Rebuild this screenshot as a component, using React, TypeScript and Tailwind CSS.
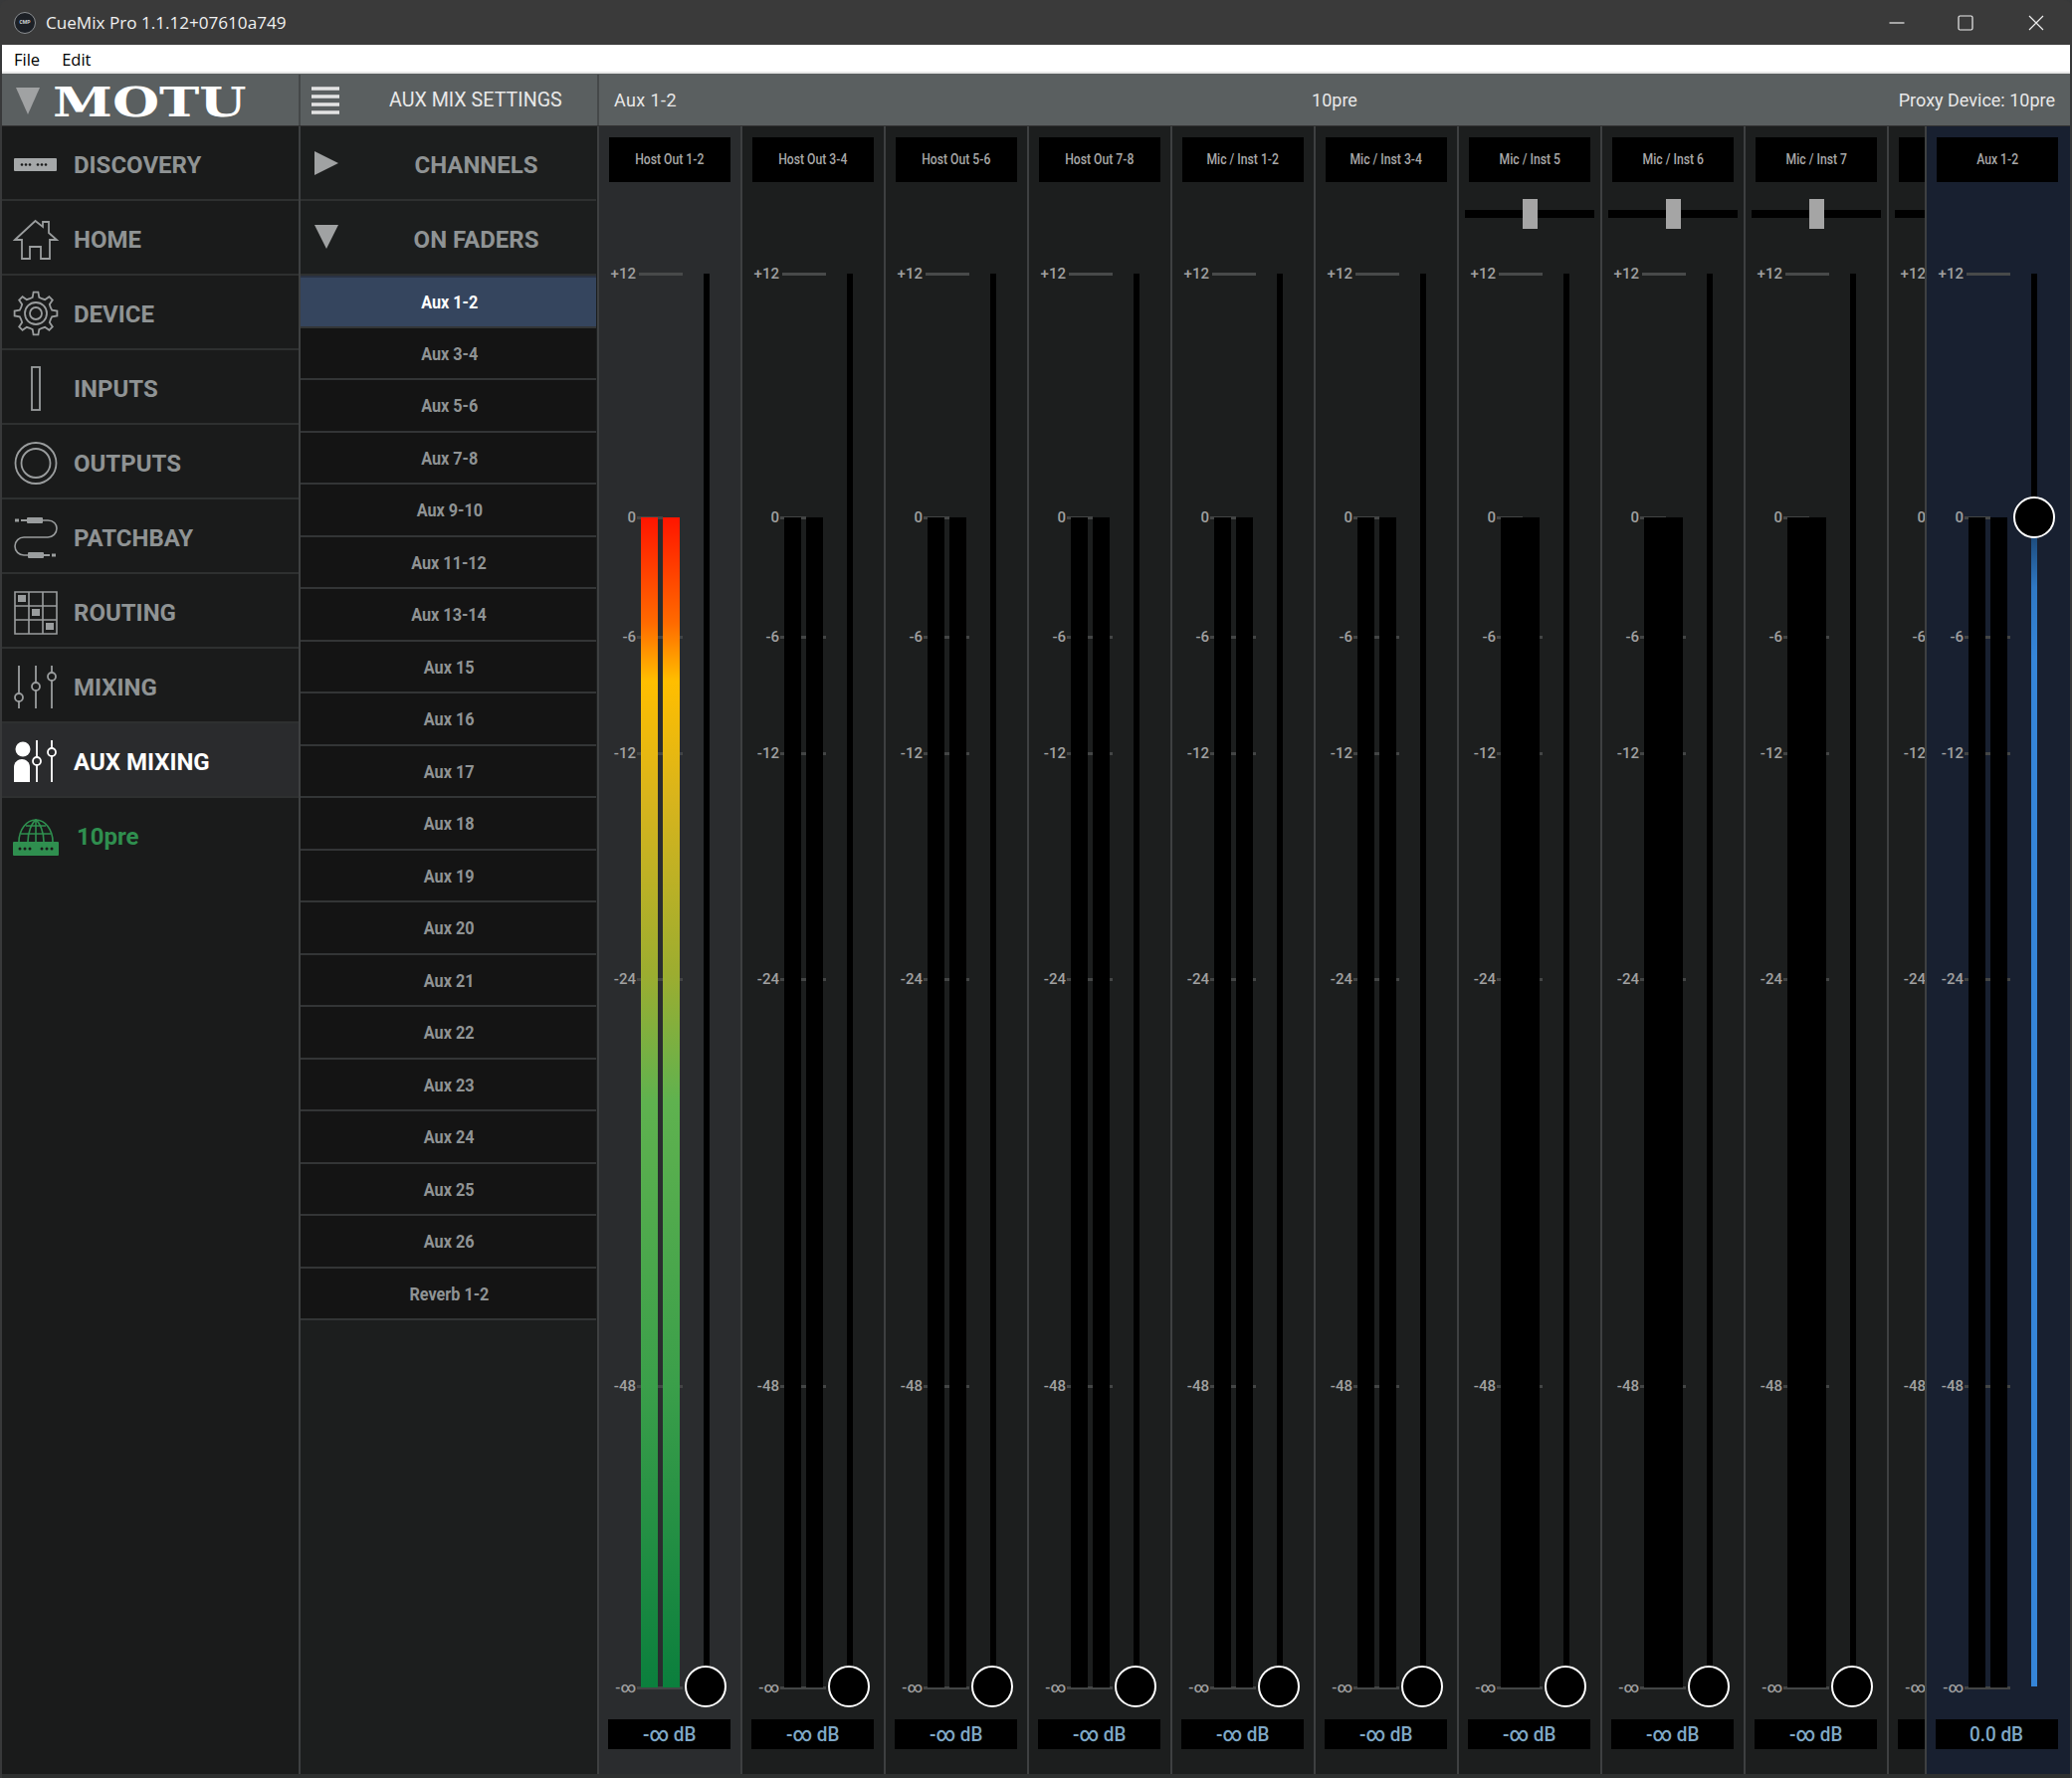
import React from 'react';

const auxList = [
  'Aux 1-2', 'Aux 3-4', 'Aux 5-6', 'Aux 7-8', 'Aux 9-10', 'Aux 11-12', 'Aux 13-14', 'Aux 15', 'Aux 16', 'Aux 17',
  'Aux 18', 'Aux 19', 'Aux 20', 'Aux 21', 'Aux 22', 'Aux 23', 'Aux 24', 'Aux 25', 'Aux 26', 'Reverb 1-2',
];

// the last strip is cut off by the aux master, none of its text shows
const channels = [
  { id: 1, name: 'Host Out 1-2', readout: '-∞ dB', stereo: true, active: true },
  { id: 2, name: 'Host Out 3-4', readout: '-∞ dB', stereo: true },
  { id: 3, name: 'Host Out 5-6', readout: '-∞ dB', stereo: true },
  { id: 4, name: 'Host Out 7-8', readout: '-∞ dB', stereo: true },
  { id: 5, name: 'Mic / Inst 1-2', readout: '-∞ dB', stereo: true },
  { id: 6, name: 'Mic / Inst 3-4', readout: '-∞ dB', stereo: true },
  { id: 7, name: 'Mic / Inst 5', readout: '-∞ dB', trim: true },
  { id: 8, name: 'Mic / Inst 6', readout: '-∞ dB', trim: true },
  { id: 9, name: 'Mic / Inst 7', readout: '-∞ dB', trim: true },
  { id: 10, name: '', readout: '', trim: true },
];

// y offset of each scale mark inside the 1422px fader area
const ticks = [
  { label: '0', y: 245 },
  { label: '-6', y: 365 },
  { label: '-12', y: 482 },
  { label: '-24', y: 709 },
  { label: '-48', y: 1118 },
  { label: '-∞', y: 1421 },
];

const gearPath = () => {
  const pts: string[] = [];
  for (let i = 0; i < 8; i++) {
    const a = (i * Math.PI) / 4 - Math.PI / 2;
    const p = (r: number, d: number) => {
      const x = 24 + r * Math.cos(a + d);
      const y = 25 + r * Math.sin(a + d);
      return `${x.toFixed(1)} ${y.toFixed(1)}`;
    };
    pts.push(`${i === 0 ? 'M' : 'L'}${p(16.5, -0.2)}`, `L${p(21.5, -0.11)}`, `L${p(21.5, 0.11)}`, `L${p(16.5, 0.2)}`, `L${p(16, 0.39)}`);
  }
  return pts.join(' ') + ' Z';
};

const icons: Record<string, React.ReactNode> = {
  discovery: (
    <>
      <rect x="2" y="19" width="43" height="13" rx="1" fill="#a5a8a9" />
      {[8, 12, 16, 24, 28, 32].map((x) => (
        <circle key={x} cx={x + 2} cy="25.5" r="1.3" fill="#1a1b1b" />
      ))}
    </>
  ),
  home: (
    <path d="M3 26 L23.500 7 L31 13 V8 H37 V19 L45 26 H38 V45 H29 V33 H18 V45 H10 V26 Z" fill="none" stroke="#9a9d9e" strokeWidth="1.8" />
  ),
  device: (
    <>
      <path d={gearPath()} fill="none" stroke="#9a9d9e" strokeWidth="1.8" />
      <circle cx="24" cy="25" r="11" fill="none" stroke="#9a9d9e" strokeWidth="1.8" />
      <circle cx="24" cy="25" r="6" fill="none" stroke="#9a9d9e" strokeWidth="1.8" />
    </>
  ),
  inputs: <rect x="20" y="4" width="8" height="43" fill="none" stroke="#9a9d9e" strokeWidth="1.8" />,
  outputs: (
    <>
      <circle cx="24" cy="25.500" r="20.500" fill="none" stroke="#9a9d9e" strokeWidth="1.8" />
      <circle cx="24" cy="25.500" r="14.500" fill="none" stroke="#9a9d9e" strokeWidth="1.8" />
    </>
  ),
  patchbay: (
    <>
      <path d="M30 8 H36 C42 8 45 12 45 16 C45 21 41 25 36 25 H12 C7 25 3 29 3 34 C3 39 7 43 12 43 H18" fill="none" stroke="#9a9d9e" strokeWidth="1.6" />
      <rect x="3" y="6.500" width="4" height="3" fill="#9a9d9e" />
      <rect x="9" y="7" width="6" height="2" fill="#9a9d9e" />
      <rect x="15" y="5" width="16" height="6" rx="1" fill="#9a9d9e" />
      <rect x="16" y="40" width="16" height="6" rx="1" fill="#9a9d9e" />
      <rect x="32" y="42" width="6" height="2" fill="#9a9d9e" />
      <rect x="40" y="41.500" width="4" height="3" fill="#9a9d9e" />
    </>
  ),
  routing: (
    <>
      <path d="M3 5 H45 V47 H3 Z M17 5 V47 M31 5 V47 M3 19 H45 M3 33 H45" fill="none" stroke="#9a9d9e" strokeWidth="1.6" />
      <rect x="6" y="8" width="8" height="7" fill="#9a9d9e" />
      <rect x="20" y="22" width="8" height="7" fill="#9a9d9e" />
      <rect x="34" y="36" width="8" height="7" fill="#9a9d9e" />
    </>
  ),
  mixing: (
    <g stroke="#9a9d9e" strokeWidth="1.8" fill="#1a1b1b">
      <path d="M7 4 V47 M24 4 V47 M40 4 V47" />
      <circle cx="7" cy="36" r="4" />
      <circle cx="24" cy="25" r="4" />
      <circle cx="40" cy="15" r="4" />
    </g>
  ),
  aux: (
    <>
      <circle cx="11" cy="13" r="7.500" fill="#fff" />
      <path d="M2 46 V31 C2 26 6 23 10 23 C14 23 18 26 18 31 V46 Z" fill="#fff" />
      <g stroke="#fff" strokeWidth="1.8" fill="#2a2b2d">
        <path d="M25 4 V46 M40 4 V46" />
        <circle cx="25" cy="25" r="4" />
        <circle cx="40" cy="16" r="4" />
      </g>
    </>
  ),
  device10: (
    <>
      <g fill="none" stroke="#2f8f4f" strokeWidth="1.6">
        <path d="M7 30 A17 22 0 0 1 41 30" />
        <path d="M16 30 C16 20 20 11 24 8 C28 11 32 20 32 30 M24 8 V30 M9 22 H39 M14 14 H34" />
      </g>
      <rect x="1" y="30" width="46" height="14" rx="1" fill="#2f8f4f" />
      {[7, 12, 17, 29, 34, 39].map((x) => (
        <circle key={x} cx={x + 1} cy="37" r="1.500" fill="#1a1b1b" />
      ))}
    </>
  ),
};

const navItems = [
  { key: 'discovery', label: 'DISCOVERY' },
  { key: 'home', label: 'HOME' },
  { key: 'device', label: 'DEVICE' },
  { key: 'inputs', label: 'INPUTS' },
  { key: 'outputs', label: 'OUTPUTS' },
  { key: 'patchbay', label: 'PATCHBAY' },
  { key: 'routing', label: 'ROUTING' },
  { key: 'mixing', label: 'MIXING' },
  { key: 'aux', label: 'AUX MIXING', active: true },
];

const FaderArea = ({ stereo, level, value }: { stereo?: boolean; level?: boolean; value?: boolean }) => (
  <div className="relative h-[1422px] shrink-0">
    {/* +12 mark */}
    <div className="absolute left-0 top-[-8px] h-4 w-[37px] text-right text-[15px] leading-4 font-medium whitespace-nowrap text-[#a0a0a0]">
      +12
    </div>
    <div className="absolute left-[40px] top-[-1px] h-[3px] w-[44px] bg-[#484a4a]" />

    {ticks.map((t) => (
      <React.Fragment key={t.label}>
        <div className={`absolute left-[38px] h-[3px] bg-[#434545] ${t.label === '0' ? 'w-[26px]' : 'w-[46px]'}`} style={{ top: t.y - 1 }} />
        <div
          className="absolute left-0 h-4 w-[37px] text-right text-[15px] leading-4 font-medium text-[#a0a0a0]"
          style={{ top: t.y - 8 }}
        >
          {t.label}
        </div>
      </React.Fragment>
    ))}

    {/* meters */}
    {stereo ? (
      <>
        <div className={`absolute left-[42px] top-[245px] h-[1176px] w-[17px] ${level ? 'bg-[linear-gradient(#ff1500_0%,#ff6a00_9%,#ffbe00_14%,#d8b41c_24%,#9cad30_39%,#5fb24f_50%,#3b9f4a_74%,#0b7f3d_100%)]' : 'bg-black'}`} />
        <div className={`absolute left-[64px] top-[245px] h-[1176px] w-[17px] ${level ? 'bg-[linear-gradient(#ff1500_0%,#ff6a00_9%,#ffbe00_14%,#d8b41c_24%,#9cad30_39%,#5fb24f_50%,#3b9f4a_74%,#0b7f3d_100%)]' : 'bg-black'}`} />
      </>
    ) : (
      <div className="absolute left-[42px] top-[245px] h-[1176px] w-[39px] bg-black" />
    )}

    {/* fader */}
    <div className="absolute left-[105px] top-0 h-[1420px] w-[6px] bg-black" />
    {value ? (
      <>
        <div className="absolute left-[105px] top-[245px] h-[1175px] w-[6px] bg-[linear-gradient(#163a60_0%,#2f78c4_6%,#3585d8_12%,#3585d8_100%)]" />
        <div className="absolute left-[87px] top-[224px] h-[42px] w-[42px] rounded-full border-2 border-white bg-black" />
      </>
    ) : (
      <div className="absolute left-[86px] top-[1399px] h-[42px] w-[42px] rounded-full border-2 border-white bg-black" />
    )}
  </div>
);

const Strip = ({
  name,
  stereo,
  trim,
  active,
  value,
  readout,
  className,
}: {
  name: string;
  stereo?: boolean;
  trim?: boolean;
  active?: boolean;
  value?: boolean;
  readout: string;
  className: string;
}) => (
  <div className={`flex w-[144px] shrink-0 flex-col pt-[11px] ${className} ${active ? 'bg-[#2a2c2e]' : ''}`}>
    <div className="mx-[10px] flex h-[45px] w-[122px] shrink-0 items-center justify-center bg-black text-[14px] font-medium text-[#a8a8a8]">
      <span className="inline-block scale-x-[0.87] whitespace-nowrap">{name}</span>
    </div>
    <div className="flex h-[92px] shrink-0 items-start pl-[6px] pt-[17px]">
      {trim && (
        <div className="flex h-[30px] w-[130px] items-center justify-center bg-[linear-gradient(transparent_11px,#000_11px,#000_19px,transparent_19px)]">
          <div className="h-[30px] w-[15px] bg-[#a5a5a5]" />
        </div>
      )}
    </div>
    <FaderArea stereo={stereo} level={active} value={value} />
    <div className="mx-[9px] mt-[31px] flex h-[30px] w-[123px] shrink-0 items-center justify-center bg-black pt-[2px] text-[21px] font-medium text-[#7fa8c6]">
      <span className="inline-block scale-x-[0.9] whitespace-nowrap">{readout}</span>
    </div>
  </div>
);

export default function App() {
  return (
    <div className="relative h-[1787px] w-[2082px] overflow-hidden bg-[#38393a] font-['Roboto',sans-serif]">
      {/* title bar */}
      <div className="flex h-[45px] items-center rounded-tl-lg rounded-tr-lg bg-[#3a3a3a] pl-[14px] text-white">
        <div className="flex h-[22px] w-[22px] items-center justify-center rounded-full border border-[#8a8d90] bg-[#1c2026] text-[5px] font-bold text-[#cfd2d4]">
          CMP
        </div>
        <span className="ml-[10px] font-['Open_Sans',sans-serif] text-[17.100px] text-[#f0f0f0]">CueMix Pro 1.1.12+07610a749</span>
        <div className="ml-auto flex items-center">
          <svg width="16" height="16" viewBox="0 0 16 16" className="mr-[53px]">
            <path d="M0.500 8 H15.500" stroke="#eee" strokeWidth="1.200" />
          </svg>
          <svg width="16" height="16" viewBox="0 0 16 16" className="mr-[55px]">
            <rect x="1" y="1" width="14" height="14" rx="1.500" fill="none" stroke="#eee" strokeWidth="1.200" />
          </svg>
          <svg width="16" height="16" viewBox="0 0 16 16" className="mr-[28px]">
            <path d="M1 1 L15 15 M15 1 L1 15" stroke="#eee" strokeWidth="1.200" />
          </svg>
        </div>
      </div>

      <div className="mx-[2px] flex h-[1742px] flex-col">
        {/* menu */}
        <div className="flex h-[29px] shrink-0 items-center gap-[22px] border-b-[2px] border-[#e8e8e8] bg-white pl-[12px] pt-[3px] font-['Open_Sans',sans-serif] text-[16.500px] text-black">
          <span>File</span>
          <span>Edit</span>
        </div>

        {/* header */}
        <div className="flex h-[53px] shrink-0 border-b border-[#333] bg-[#5a5f60] pt-[1px] text-[#e8e8e8]">
          <div className="flex w-[300px] items-center border-r-2 border-[#454849] pl-[14px]">
            <svg width="24" height="28" viewBox="0 0 24 28">
              <path d="M0 1 H24 L12 28 Z" fill="#a0a2a3" />
            </svg>
            <span className="ml-[13px] mt-[5px] inline-block origin-left scale-x-[1.32] font-['DejaVu_Serif',serif] text-[41px] leading-none font-bold text-white">
              MOTU
            </span>
          </div>
          <div className="relative flex w-[300px] items-center border-r-2 border-[#454849] pl-[11px]">
            <svg width="28" height="28" viewBox="0 0 28 28">
              <path d="M0 2 H28 M0 10 H28 M0 18 H28 M0 26 H28" stroke="#e4e4e4" strokeWidth="3.500" />
            </svg>
            <span className="ml-[50px] text-[20.500px] whitespace-nowrap">
              <span className="inline-block origin-left scale-x-[0.96]">AUX MIX SETTINGS</span>
            </span>
          </div>
          <div className="grid flex-1 grid-cols-3 items-center pl-[15px] pr-[15px] text-[18px]">
            <span className="tracking-[0.4px]">Aux 1-2</span>
            <span className="text-center">10pre</span>
            <span className="text-right">Proxy Device: 10pre</span>
          </div>
        </div>

        <div className="flex min-h-0 flex-1 border-b-[4px] border-[#2e3030] bg-[#1c1e1e]">
          {/* navigation */}
          <div className="w-[300px] shrink-0 border-r-2 border-[#3e4041] bg-[#1a1b1b]">
            {navItems.map((n) => (
              <div
                key={n.key}
                className={`flex h-[75px] items-center gap-[14px] border-b-2 border-[#2e3030] pl-[10px] text-[24px] font-bold ${
                  n.active ? 'bg-[#2a2b2d] text-white' : 'text-[#8f9394]'
                }`}
              >
                <svg width="48" height="48" viewBox="0 0 48 48" className="shrink-0">
                  {icons[n.key]}
                </svg>
                <span className="mt-[5px]">{n.label}</span>
              </div>
            ))}
            <div className="flex h-[75px] items-center gap-[17px] pl-[10px] text-[24px] font-bold text-[#2f8f4f]">
              <svg width="48" height="48" viewBox="0 0 48 48" className="shrink-0">
                {icons.device10}
              </svg>
              <span className="mt-[2px]">10pre</span>
            </div>
          </div>

          {/* aux list */}
          <div className="w-[298px] shrink-0 border-r border-[#1c1e1e] bg-[#1c1e1e]">
            <div className="flex h-[75px] items-center border-b-2 border-[#2e3030] pl-[14px] text-[24px] font-bold text-[#8f9394]">
              <svg width="24" height="24" viewBox="0 0 24 24" className="shrink-0">
                <path d="M0 0 L24 12 L0 24 Z" fill="#a0a2a3" />
              </svg>
              <span className="mt-[5px] flex-1 pl-[18px] text-center">CHANNELS</span>
            </div>
            <div className="flex h-[75px] items-center border-b-2 border-[#2e3030] pl-[14px] text-[24px] font-bold text-[#8f9394]">
              <svg width="24" height="24" viewBox="0 0 24 24" className="mb-[2px] shrink-0">
                <path d="M0 0 H24 L12 24 Z" fill="#a0a2a3" />
              </svg>
              <span className="mt-[5px] flex-1 pl-[18px] text-center">ON FADERS</span>
            </div>
            {auxList.map((a, i) => (
              <div
                key={a}
                className={`flex h-[52.500px] items-center justify-center border-b-2 border-[#333536] pl-[2px] pt-[1px] text-[18px] font-bold ${
                  i === 0 ? 'border-t-2 border-t-[#2a3344] bg-[#35455e] text-white' : 'bg-[#141414] text-[#8f9394]'
                }`}
              >
                <span className="inline-block scale-x-[0.9] whitespace-nowrap">{a}</span>
              </div>
            ))}
          </div>

          {/* channel strips */}
          <div className="flex min-w-0 flex-1 overflow-hidden border-x-2 border-[#3e4041]">
            {channels.map((c) => (
              <Strip
                key={c.id}
                name={c.name}
                stereo={c.stereo}
                trim={c.trim}
                active={c.active}
                readout={c.readout}
                className="border-r-2 border-[#3e4041]"
              />
            ))}
          </div>

          {/* aux master */}
          <Strip name="Aux 1-2" stereo value readout="0.0 dB" className="bg-[#182030]" />
        </div>
      </div>
    </div>
  );
}
